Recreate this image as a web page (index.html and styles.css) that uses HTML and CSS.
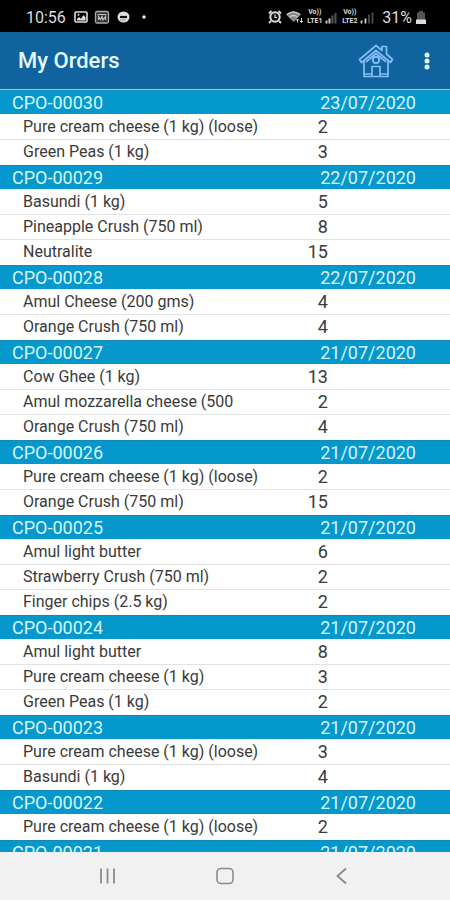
FILE: index.html
```html
<!DOCTYPE html>
<html lang="en">
<head>
<meta charset="utf-8">
<meta name="viewport" content="width=device-width, initial-scale=1">
<title>My Orders</title>
<link rel="stylesheet" href="styles.css">
</head>
<body>
<div class="status">
  <span class="time">10:56</span>
  <svg class="picture" width="14" height="14" viewBox="0 0 14 14"><rect x="1" y="2" width="12" height="10" rx="1" fill="none" stroke="#ddd" stroke-width="1.6"/><path d="M3 10.5V9l2-2 2 2 2.500-4 2 2.500v3z" fill="#ddd"/><circle cx="4.500" cy="4.800" r="1" fill="#ddd"/></svg>
  <svg class="calendar" width="16" height="14" viewBox="0 0 16 14"><rect x="1.500" y="1.500" width="13" height="11.500" rx="1.500" fill="#333" stroke="#aaa" stroke-width="1.300"/><path d="M3.500 4.500h9M4.500 10V6.500l2 3 1.500-3 1 3.500 2.500-3.500V10" fill="none" stroke="#bbb" stroke-width="1.200"/></svg>
  <svg class="dnd" width="13" height="12" viewBox="0 0 13 12"><ellipse cx="6.500" cy="6" rx="6" ry="5.500" fill="#ddd"/><path d="M3 6h7" stroke="#111" stroke-width="2.200"/><path d="M3 9h6" stroke="#888" stroke-width=".8"/></svg>
  <svg class="dot" width="4" height="4" viewBox="0 0 4 4"><circle cx="2" cy="2" r="1.800" fill="#eee"/></svg>
  <span class="spacer"></span>
  <svg width="14" height="14" viewBox="0 0 14 14"><path d="M1 3.500L3.500 1M13 3.500L10.500 1M3 11l-2 2M11 11l2 2" stroke="#ddd" stroke-width="1.800"/><circle cx="7" cy="7" r="4.700" fill="#111" stroke="#ddd" stroke-width="2"/><path d="M7 4.500V7.500h2" fill="none" stroke="#ddd" stroke-width="1.200"/></svg>
  <svg class="wifi" width="18" height="14" viewBox="0 0 18 14"><path d="M0 4.500Q7.500-1.500 15 4.500L7.500 12z" fill="#888"/><path d="M1 4.500Q7.500-.5 14 4.500M3.500 7q4-3 8 0" fill="none" stroke="#ccc" stroke-width="1.400"/><path d="M11.500 12.500V9M10 10.500L11.500 9l1.500 1.500M15.500 8v4.500M14 11l1.500 1.500L17 11" fill="none" stroke="#ddd"/></svg>
  <span class="volte"><span>Vo))</span><span>LTE1</span></span>
  <svg class="signal" width="12" height="13" viewBox="0 0 12 13"><path d="M1.500 12.500v-3M4.500 12.500v-5" stroke="#ccc" stroke-width="2"/><path d="M7.500 12.500v-8M10.500 12.500V2" stroke="#555" stroke-width="2"/></svg>
  <span class="volte second"><span>Vo))</span><span>LTE2</span></span>
  <svg class="signal" width="14" height="13" viewBox="0 0 14 13"><path d="M1.500 12.500v-3M5.500 12.500v-5" stroke="#ccc" stroke-width="1.800"/><path d="M9 12.500v-9M12.500 12.500V1.500" stroke="#555" stroke-width="1.600"/></svg>
  <span class="percent">31%</span>
  <svg class="battery" width="10" height="13" viewBox="0 0 10 13"><path d="M3 0h4v1.500h2V13H1V1.500h2z" fill="#555"/><path d="M0 8.500h10V13H0z" fill="#ddd"/></svg>
</div>
<header class="appbar">
  <h1>My Orders</h1>
  <a class="home" href="#home" aria-label="Home">
    <svg width="36" height="34" viewBox="0 0 36 34" fill="none" stroke="#83bdf5" stroke-width="1.700" stroke-linejoin="round" stroke-linecap="round"><path d="M6 17.500V32.500H30V17.500"/><path d="M18 1.500L1.500 15.500L3.500 18.500L18 6.500L32.500 18.500L34.500 15.500L28.500 10V2.500H24V6.500Z"/><path d="M8.500 17.500L18 9.500L27.500 17.500"/><circle cx="18" cy="16" r="3.200" stroke-width="2"/><path d="M14 32V22.500H22V32M6 30H14M22 30H30"/></svg>
  </a>
  <button class="more" type="button" aria-label="More options">
    <svg width="6" height="18" viewBox="0 0 6 18" fill="#e4f8ff"><circle cx="3" cy="3" r="2.500"/><circle cx="3" cy="9" r="2.500"/><circle cx="3" cy="15" r="2.500"/></svg>
  </button>
</header>
<main class="orders">
  <table>
    <colgroup><col><col class="qty-col"><col class="end-col"></colgroup>
    <tbody>
      <tr class="order"><th scope="rowgroup">CPO-00030</th><td colspan="2">23/07/2020</td></tr>
      <tr><td>Pure cream cheese (1 kg) (loose)</td><td class="qty">2</td><td></td></tr>
      <tr><td>Green Peas (1 kg)</td><td class="qty">3</td><td></td></tr>
    </tbody>
    <tbody>
      <tr class="order"><th scope="rowgroup">CPO-00029</th><td colspan="2">22/07/2020</td></tr>
      <tr><td>Basundi (1 kg)</td><td class="qty">5</td><td></td></tr>
      <tr><td>Pineapple Crush (750 ml)</td><td class="qty">8</td><td></td></tr>
      <tr><td>Neutralite</td><td class="qty">15</td><td></td></tr>
    </tbody>
    <tbody>
      <tr class="order"><th scope="rowgroup">CPO-00028</th><td colspan="2">22/07/2020</td></tr>
      <tr><td>Amul Cheese (200 gms)</td><td class="qty">4</td><td></td></tr>
      <tr><td>Orange Crush (750 ml)</td><td class="qty">4</td><td></td></tr>
    </tbody>
    <tbody>
      <tr class="order"><th scope="rowgroup">CPO-00027</th><td colspan="2">21/07/2020</td></tr>
      <tr><td>Cow Ghee (1 kg)</td><td class="qty">13</td><td></td></tr>
      <tr><td>Amul mozzarella cheese (500</td><td class="qty">2</td><td></td></tr>
      <tr><td>Orange Crush (750 ml)</td><td class="qty">4</td><td></td></tr>
    </tbody>
    <tbody>
      <tr class="order"><th scope="rowgroup">CPO-00026</th><td colspan="2">21/07/2020</td></tr>
      <tr><td>Pure cream cheese (1 kg) (loose)</td><td class="qty">2</td><td></td></tr>
      <tr><td>Orange Crush (750 ml)</td><td class="qty">15</td><td></td></tr>
    </tbody>
    <tbody>
      <tr class="order"><th scope="rowgroup">CPO-00025</th><td colspan="2">21/07/2020</td></tr>
      <tr><td>Amul light butter</td><td class="qty">6</td><td></td></tr>
      <tr><td>Strawberry Crush (750 ml)</td><td class="qty">2</td><td></td></tr>
      <tr><td>Finger chips (2.5 kg)</td><td class="qty">2</td><td></td></tr>
    </tbody>
    <tbody>
      <tr class="order"><th scope="rowgroup">CPO-00024</th><td colspan="2">21/07/2020</td></tr>
      <tr><td>Amul light butter</td><td class="qty">8</td><td></td></tr>
      <tr><td>Pure cream cheese (1 kg)</td><td class="qty">3</td><td></td></tr>
      <tr><td>Green Peas (1 kg)</td><td class="qty">2</td><td></td></tr>
    </tbody>
    <tbody>
      <tr class="order"><th scope="rowgroup">CPO-00023</th><td colspan="2">21/07/2020</td></tr>
      <tr><td>Pure cream cheese (1 kg) (loose)</td><td class="qty">3</td><td></td></tr>
      <tr><td>Basundi (1 kg)</td><td class="qty">4</td><td></td></tr>
    </tbody>
    <tbody>
      <tr class="order"><th scope="rowgroup">CPO-00022</th><td colspan="2">21/07/2020</td></tr>
      <tr><td>Pure cream cheese (1 kg) (loose)</td><td class="qty">2</td><td></td></tr>
    </tbody>
    <tbody>
      <tr class="order"><th scope="rowgroup">CPO-00021</th><td colspan="2">21/07/2020</td></tr>
    </tbody>
  </table>
</main>
<nav class="navbar" aria-label="System">
  <button type="button" aria-label="Recent apps"><svg width="18" height="18" viewBox="0 0 18 18"><path d="M2 1.500v15M8.500 1.500v15M15 1.500v15" stroke="#8a8a8a" stroke-width="1.800"/></svg></button>
  <button type="button" aria-label="Home screen"><svg width="18" height="18" viewBox="0 0 18 18"><rect x="1" y="1.500" width="16" height="15" rx="4" fill="none" stroke="#8a8a8a" stroke-width="1.600"/></svg></button>
  <button type="button" aria-label="Back"><svg width="18" height="18" viewBox="0 0 18 18"><path d="M13 1.500L4.500 9L13 16.500" fill="none" stroke="#8a8a8a" stroke-width="1.800"/></svg></button>
</nav>
</body>
</html>
```
FILE: styles.css
```css
* {
  box-sizing: border-box;
}

body {
  margin: 0;
  height: 100vh;
  display: flex;
  flex-direction: column;
  font-family: Roboto, sans-serif;
  background: #fff;
}

button {
  border: 0;
  padding: 0;
  background: none;
}

svg {
  display: block;
  flex: none;
}

.status {
  flex: none;
  display: flex;
  align-items: center;
  height: 32px;
  padding: 2px 24px 0 26px;
  background: #000;
  color: #ddd;
}

.time {
  font-size: 16px;
  margin-right: 8px;
}

.calendar {
  margin-left: 6px;
}

.dnd {
  margin-left: 7px;
}

.dot {
  margin-left: 12px;
}

.spacer {
  flex: 1;
}

.wifi {
  margin-left: 4px;
}

.volte {
  display: flex;
  flex-direction: column;
  align-items: center;
  width: 17px;
  margin-left: 2px;
  font-size: 7px;
  line-height: 9px;
  font-weight: 700;
}

.signal {
  margin-left: 2px;
}

.second {
  margin-left: 4px;
}

.percent {
  margin-left: 8px;
  font-size: 16px;
}

.battery {
  margin-left: 4px;
}

.appbar {
  flex: none;
  display: flex;
  align-items: center;
  height: 58px;
  padding: 0 16px 0 18px;
  background: #10639f;
  border-bottom: 1px solid #8fd0ee;
}

.appbar h1 {
  flex: 1;
  margin: 0;
  font-size: 22px;
  font-weight: 500;
  color: #e4f8ff;
}

.more {
  display: flex;
  justify-content: center;
  width: 14px;
  margin-left: 26px;
}

.orders {
  flex: 1;
  min-height: 0;
  overflow: auto;
  scrollbar-width: none;
}

table {
  width: 100%;
  table-layout: fixed;
  border-collapse: separate;
  border-spacing: 0;
}

.qty-col {
  width: 40px;
}

.end-col {
  width: 122px;
}

th,
td {
  height: 25px;
  padding: 0;
  line-height: 22px;
  white-space: nowrap;
  font-size: 16px;
  font-weight: 400;
  text-align: left;
  color: #3a3a3a;
  border-bottom: 1px solid #e2e2e2;
}

td:first-child {
  padding-left: 23px;
}

.qty {
  font-size: 18px;
  text-align: right;
}

tr:last-child td {
  border-bottom-color: #fff;
}

.order th,
.order td {
  font-size: 18px;
  color: #d5f5ff;
  background: #0498cd;
  border-top: 1px solid #1488b8;
  border-bottom: 1px solid #fff;
}

.order th {
  padding-left: 12px;
}

.order td {
  padding-right: 34px;
  text-align: right;
}

.navbar {
  flex: none;
  display: flex;
  justify-content: center;
  align-items: center;
  height: 48px;
  background: #f1f1f1;
}

.navbar button {
  display: flex;
  justify-content: center;
  width: 26%;
}
```
